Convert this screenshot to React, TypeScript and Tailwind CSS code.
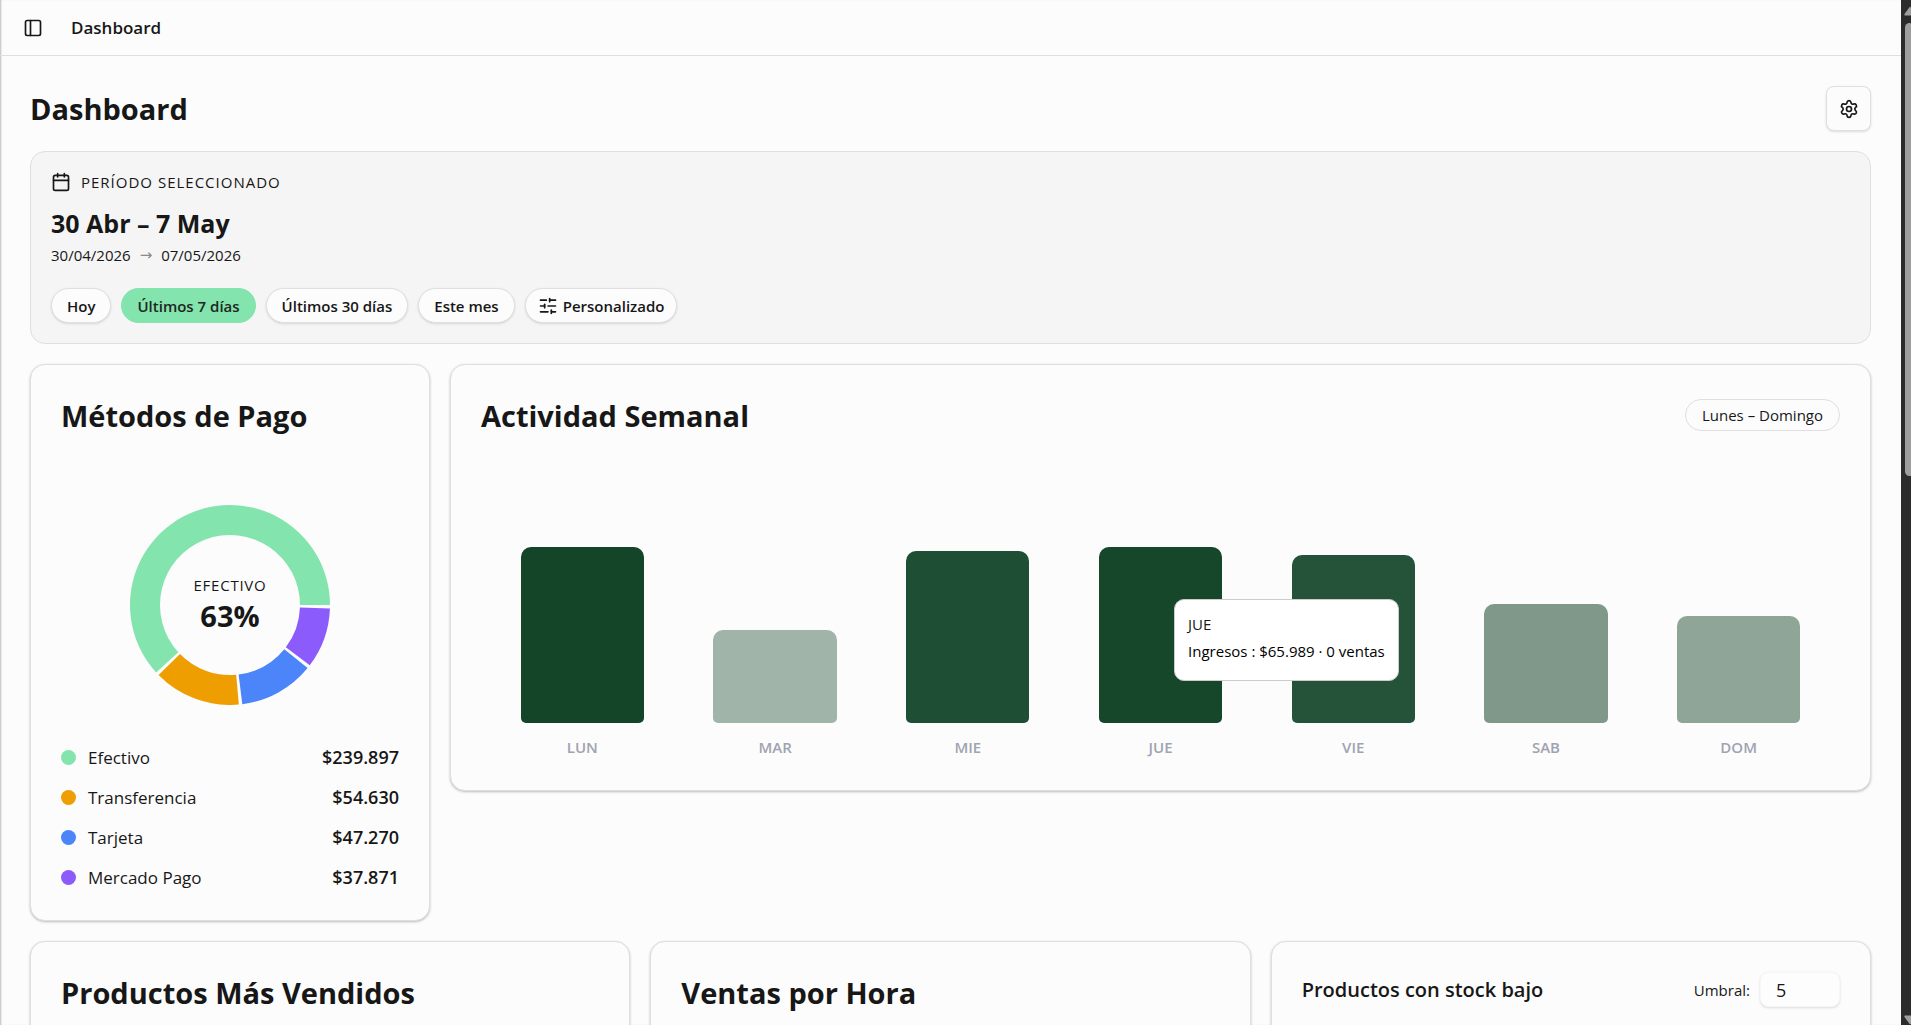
import type { ReactElement, ReactNode } from 'react';
import { Calendar, PanelLeft, Settings, SlidersHorizontal } from 'lucide-react';

interface PaymentMethod {
  label: string;
  amount: number;
  color: string;
}

interface DayActivity {
  day: string;
  height: number;
  color: string;
}

const PAYMENT_METHODS: PaymentMethod[] = [
  { label: 'Efectivo', amount: 239897, color: '#83e4ad' },
  { label: 'Transferencia', amount: 54630, color: '#ee9e00' },
  { label: 'Tarjeta', amount: 47270, color: '#4b85f9' },
  { label: 'Mercado Pago', amount: 37871, color: '#8b5cfb' },
];

const WEEK: DayActivity[] = [
  { day: 'LUN', height: 176, color: '#144529' },
  { day: 'MAR', height: 93, color: '#a1b4a9' },
  { day: 'MIE', height: 172, color: '#1e4e33' },
  { day: 'JUE', height: 176, color: '#16472b' },
  { day: 'VIE', height: 168, color: '#25533a' },
  { day: 'SAB', height: 119, color: '#7f9889' },
  { day: 'DOM', height: 107, color: '#8ea598' },
];

const PERIODS = ['Hoy', 'Últimos 7 días', 'Últimos 30 días', 'Este mes'];
const ACTIVE_PERIOD = 'Últimos 7 días';

const OUTER_RADIUS = 100;
const INNER_RADIUS = 70;
const PADDING_ANGLE = 2;

function formatAmount(amount: number): string {
  return `$${String(amount).replace(/\B(?=(\d{3})+$)/g, '.')}`;
}

function polar(radius: number, degrees: number): string {
  const radians = (degrees * Math.PI) / 180;
  return `${(100 + radius * Math.cos(radians)).toFixed(2)} ${(100 - radius * Math.sin(radians)).toFixed(2)}`;
}

/* Slices run counter-clockwise from three o'clock. */
function slicePath(start: number, end: number): string {
  const large = end - start > 180 ? 1 : 0;
  return [
    `M${polar(OUTER_RADIUS, start)}`,
    `A${OUTER_RADIUS} ${OUTER_RADIUS} 0 ${large} 0 ${polar(OUTER_RADIUS, end)}`,
    `L${polar(INNER_RADIUS, end)}`,
    `A${INNER_RADIUS} ${INNER_RADIUS} 0 ${large} 1 ${polar(INNER_RADIUS, start)}Z`,
  ].join('');
}

function Card({ children, className = '' }: { children: ReactNode; className?: string }): ReactElement {
  return (
    <section
      className={`rounded-[15px] border border-[#dfdfdf] bg-[#fcfcfc] p-[30px] shadow-[0_1px_3px_rgba(0,0,0,0.17),0_1px_2px_rgba(0,0,0,0.1)] ${className}`}
    >
      {children}
    </section>
  );
}

function CardTitle({ children }: { children: ReactNode }): ReactElement {
  return <h2 className="text-[29px] leading-[42px] font-bold">{children}</h2>;
}

function PaymentDonut(): ReactElement {
  const total = PAYMENT_METHODS.reduce((sum, method) => sum + method.amount, 0);
  const available = 360 - PADDING_ANGLE * PAYMENT_METHODS.length;
  let angle = 0;
  const slices = PAYMENT_METHODS.map((method) => {
    const start = angle;
    const end = start + (method.amount / total) * available;
    angle = end + PADDING_ANGLE;
    return { ...method, d: slicePath(start, end) };
  });
  return (
    <div className="mx-auto mt-[68px] grid size-[200px] place-items-center">
      <svg viewBox="0 0 200 200" className="col-start-1 row-start-1 size-full" aria-hidden>
        {slices.map((slice) => (
          <path key={slice.label} d={slice.d} fill={slice.color} />
        ))}
      </svg>
      <div className="col-start-1 row-start-1 pt-[2px] text-center">
        <p className="text-[15px] leading-5 tracking-wider uppercase">Efectivo</p>
        <p className="text-[29px] leading-[42px] font-bold">
          {Math.round((PAYMENT_METHODS[0].amount / total) * 100)}%
        </p>
      </div>
    </div>
  );
}

function PaymentMethods(): ReactElement {
  return (
    <Card className="w-[400px] shrink-0">
      <CardTitle>Métodos de Pago</CardTitle>
      <PaymentDonut />
      <ul className="mt-10 space-y-[15px] leading-[25px]">
        {PAYMENT_METHODS.map((method) => (
          <li key={method.label} className="flex items-center justify-between">
            <span className="flex items-center gap-3 text-[17px]">
              <span className="size-[15px] rounded-full" style={{ backgroundColor: method.color }} />
              {method.label}
            </span>
            <span className="text-[18px] font-semibold">{formatAmount(method.amount)}</span>
          </li>
        ))}
      </ul>
    </Card>
  );
}

function WeeklyActivity(): ReactElement {
  return (
    <Card className="min-w-0 flex-1">
      <div className="flex items-start justify-between">
        <CardTitle>Actividad Semanal</CardTitle>
        <span className="mt-1 rounded-full border border-[#dfdfdf] px-4 py-[5px] text-[15px] leading-5">
          Lunes – Domingo
        </span>
      </div>
      <div className="relative mt-[18px] flex h-[305px] px-[5px] pb-[3px]">
        {WEEK.map(({ day, height, color }) => (
          <div key={day} className="flex flex-1 flex-col items-center justify-end gap-[14px]">
            <div
              className="w-[64%] rounded-t-[10px] rounded-b-[5px]"
              style={{ height, backgroundColor: color }}
            />
            <span className="text-[15px] leading-5 font-semibold text-[#9fa3b1]">{day}</span>
          </div>
        ))}
        <div
          role="tooltip"
          className="absolute top-36 left-[51%] rounded-[10px] border border-[#cccccc] bg-white px-[13px] pt-[11px] pb-[15px] text-[15px] leading-[27px] whitespace-nowrap"
        >
          <p>JUE</p>
          <p className="text-black">Ingresos : $65.989 · 0 ventas</p>
        </div>
      </div>
    </Card>
  );
}

function PeriodPicker(): ReactElement {
  return (
    <section className="mt-5 rounded-[15px] border border-[#dfdfdf] bg-[#f5f5f5] p-5">
      <div className="flex items-center gap-[10px]">
        <Calendar size={20} />
        <span className="text-[15px] leading-5 font-medium tracking-[1px] uppercase">
          Período seleccionado
        </span>
      </div>
      <p className="mt-[14px] text-[25px] leading-[35px] font-bold">30 Abr – 7 May</p>
      <p className="mt-1 flex gap-[9px] text-[15px] leading-5">
        30/04/2026 <span className="font-['DejaVu_Sans',sans-serif] text-[#8a8a8a]">→</span> 07/05/2026
      </p>
      <div className="mt-[23px] flex flex-wrap gap-[10px]">
        {PERIODS.map((period) => (
          <button
            key={period}
            type="button"
            aria-pressed={period === ACTIVE_PERIOD}
            className={`h-[35px] cursor-pointer rounded-full border px-[15px] text-[15px] leading-5 font-semibold ${
              period === ACTIVE_PERIOD
                ? 'border-[#83e4ad] bg-[#83e4ad] text-[#1e2723]'
                : 'border-[#dfdfdf] bg-[#fcfcfc] shadow-sm'
            }`}
          >
            {period}
          </button>
        ))}
        <button
          type="button"
          className="flex h-[35px] cursor-pointer items-center gap-[5px] rounded-full border border-[#dfdfdf] bg-[#fcfcfc] px-3 text-[15px] leading-5 font-semibold shadow-sm"
        >
          <SlidersHorizontal size={20} />
          Personalizado
        </button>
      </div>
    </section>
  );
}

function LowStock(): ReactElement {
  return (
    <Card>
      <div className="flex h-[35px] items-center justify-between">
        <h3 className="text-[20px] leading-[30px] font-semibold">Productos con stock bajo</h3>
        <div className="flex items-center gap-[10px]">
          <label htmlFor="threshold" className="text-[15px] leading-5">
            Umbral:
          </label>
          <input
            id="threshold"
            type="text"
            inputMode="numeric"
            defaultValue="5"
            className="h-[35px] w-20 rounded-[8px] border border-[#f6f6f6] bg-[#fdfdfd] px-[15px] text-[18px] shadow-sm"
          />
        </div>
      </div>
    </Card>
  );
}

/* Dark classic scrollbar along the right edge of the window. */
function ScrollRail(): ReactElement {
  return (
    <div aria-hidden className="flex w-[10px] shrink-0 flex-col justify-between overflow-hidden bg-[#2c2c2c] pt-[6px]">
      <div className="pl-[3px]">
        <svg width="12" height="10" viewBox="0 0 12 10" fill="#9f9f9f">
          <path d="M6 0.5 L11.5 8 Q12 9.5 11 9.5 H1 Q0 9.5 0.5 8Z" />
        </svg>
        <div className="mt-[7px] ml-px h-[453px] w-[9px] rounded-[5px] bg-[#9f9f9f]" />
      </div>
      <svg width="12" height="10" viewBox="0 0 12 10" fill="#9f9f9f" className="ml-[3px]">
        <path d="M6 9.5 L11.5 2 Q12 0.5 11 0.5 H1 Q0 0.5 0.5 2Z" />
      </svg>
    </div>
  );
}

export default function App(): ReactElement {
  return (
    <div className="flex h-screen overflow-hidden bg-[#fcfcfc] font-['Open_Sans','Noto_Sans',sans-serif] text-[#171717]">
      <main className="min-w-0 flex-1 overflow-hidden shadow-[inset_2px_0_2px_-1px_rgba(0,0,0,0.25)]">
        <header className="flex h-14 items-center gap-7 border-b border-[#dfdfdf] px-[23px]">
          <button type="button" aria-label="Alternar menú" className="cursor-pointer">
            <PanelLeft size={20} />
          </button>
          <span className="text-[17px] leading-[25px] font-semibold">Dashboard</span>
        </header>
        <div className="p-[30px]">
          <div className="flex items-center justify-between">
            <h1 className="text-[29px] leading-[42px] font-bold">Dashboard</h1>
            <button
              type="button"
              aria-label="Configuración"
              className="grid size-[45px] cursor-pointer place-items-center rounded-[8px] border border-[#dfdfdf] bg-[#fcfcfc] shadow-sm"
            >
              <Settings size={20} />
            </button>
          </div>
          <PeriodPicker />
          <div className="mt-5 flex items-start gap-5">
            <PaymentMethods />
            <WeeklyActivity />
          </div>
          <div className="mt-5 grid grid-cols-3 gap-5">
            <Card>
              <CardTitle>Productos Más Vendidos</CardTitle>
            </Card>
            <Card>
              <CardTitle>Ventas por Hora</CardTitle>
            </Card>
            <LowStock />
          </div>
        </div>
      </main>
      <ScrollRail />
    </div>
  );
}
